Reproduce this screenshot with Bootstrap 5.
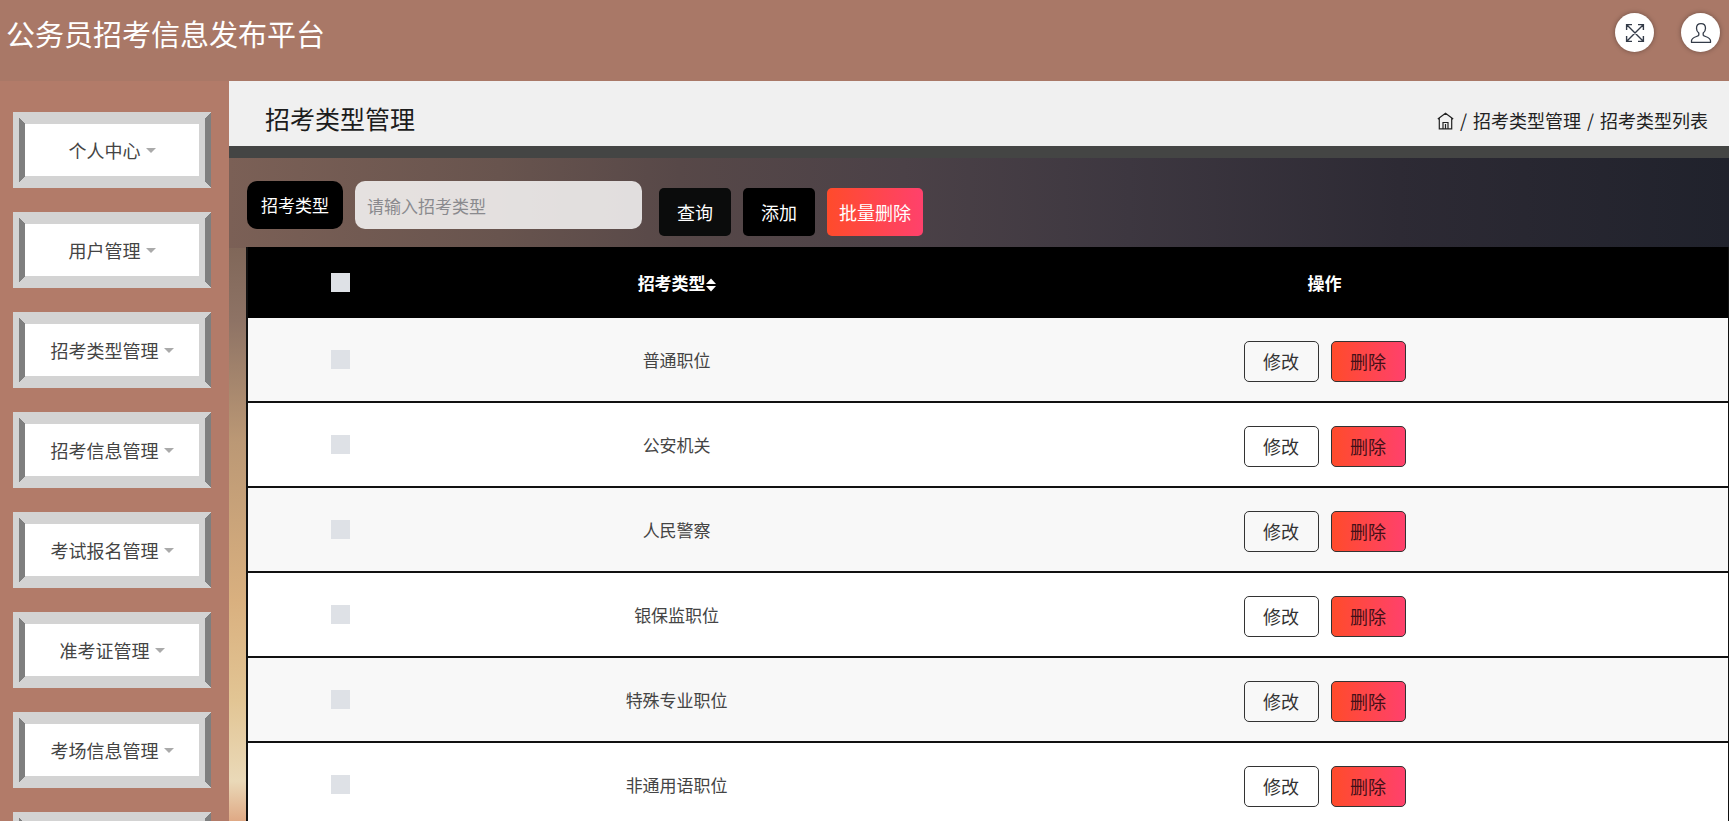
<!DOCTYPE html>
<html lang="zh-CN">
<head>
<meta charset="utf-8">
<meta name="viewport" content="width=device-width, initial-scale=1">
<title>公务员招考信息发布平台</title>
<link href="https://cdn.jsdelivr.net/npm/bootstrap@5.3.0/dist/css/bootstrap.min.css" rel="stylesheet">
<style>
  body { font-family: "Noto Sans CJK SC", sans-serif; font-size: 17px; line-height: 24px; padding-right: 2px; background: #fff; }
  .topbar { background: #a97867; height: 81px; padding: 0 9px 16px 6px; }
  .brand { color: #fff; font-size: 29px; line-height: 40px; }
  .round-btn { width: 39px; height: 39px; background: #fff; color: #333b48; box-shadow: 0 0 5px rgba(0,0,0,.35); }
  .tool-gap { gap: 27px; }
  .scroller { overflow-y: auto; scrollbar-width: none; }
  .scroller::-webkit-scrollbar { display: none; }
  .side { width: 229px; background: #b27b69; padding: 31px 18px 24px 13px; gap: 24px; }
  .side-link { height: 76px; gap: 5px; background: #fff; border: 12px solid lightgray; border-left-style: ridge; border-right-style: ridge; color: #444; font-size: 18px; border-radius: 0; padding: 0; }
  .caret { border: 5px solid transparent; border-top-color: #aaa; border-bottom: 0; }
  .content-area { min-width: 0;
    background: linear-gradient(90deg, #7b6056 0, #68544e 18%, #574848 30%, #4b4147 45%, #3d3740 60%, #2d2a34 78%, #20222c 100%) top / 100% 167px no-repeat,
      linear-gradient(#806759 167px, #8e7365 240px, #bb9875 360px, #d9b07f 520px, #e2c594 620px, #ead9b8 700px, #dfa985 740px); }
  .page-head { background: #f0f0f0; border-bottom: 12px solid #444544; height: 77px; padding: 0 21px 0 36px; }
  .page-title { font-size: 25px; line-height: 36px; color: #1c1c1c; }
  .breadcrumb { --bs-breadcrumb-item-padding-x: 6px; --bs-breadcrumb-divider-color: #222; font-size: 18px; color: #222; padding-top: 12px; }
  .breadcrumb svg { vertical-align: -2px; }
  .breadcrumb .active { color: #222; }
  .toolbar { padding: 23px 18px 11px; }
  .field-label { background: #000; color: #fff; border-radius: 10px; height: 48px; padding: 12px 14px; }
  .keyword { width: 287px; height: 48px; border: 0; border-radius: 10px; background: rgba(255,255,255,.82); font-size: 17px; padding: 0 12px; }
  .keyword::placeholder { color: #8a8a8e; }
  .tool-group { gap: 12px; padding: 7px 0 0 1px; }
  .tool-btn { height: 48px; font-size: 18px; border: 0; border-radius: 5px; color: #fff; padding: 0 18px; }
  .tool-wide { padding: 0 12px; }
  .bg-ink { background: #0b0c0c; }
  .hot { background: linear-gradient(90deg, #ff4b2b, #ff416c); }
  .table-frame { margin-left: 17px; }
  .type-table { table-layout: fixed; border: 1px solid #111; border-left-width: 2px; border-top: 0; font-size: 17px; color: #444; text-align: center; }
  .type-table > thead th { background: #000; color: #fff; height: 71px; border: 0; padding: 0; vertical-align: middle; }
  .type-table > tbody td { background: #fff; border-bottom: 2px solid #111; height: 85px; padding: 0; box-shadow: none; }
  .type-table > tbody tr:first-child td { height: 84px; }
  .type-table > tbody tr:nth-child(odd) td { background: #f8f8f8; }
  .col-check { width: 12.5%; }
  .col-type { width: 33%; }
  .tick { appearance: none; width: 19px; height: 19px; background: #dee1e6; display: block; margin: 0 auto; }
  .tick:checked { background: #6c757d; }
  .row-btn { width: 75px; height: 41px; border: 1px solid #333; border-radius: 5px; font-size: 18px; color: #333; padding: 0; }
  .row-btn.hot { color: #441018; }
  .row-tools { gap: 12px; padding-top: 4px; }
</style>
</head>
<body>
<div class="d-flex flex-column vh-100">
  <header class="topbar d-flex align-items-center justify-content-between flex-shrink-0">
    <h1 class="brand fw-normal mb-0">公务员招考信息发布平台</h1>
    <div class="d-flex tool-gap">
      <button type="button" class="btn round-btn rounded-circle p-0 d-flex align-items-center justify-content-center" aria-label="全屏">
        <svg width="20" height="20" viewBox="0 0 20 20" fill="none" stroke="currentColor" stroke-width="1.4"><path d="M2 2l16 16M18 2L2 18M1.600 7V1.600H7M13 1.600h5.400V7M18.400 13v5.400H13M7 18.400H1.600V13"/></svg>
      </button>
      <button type="button" class="btn round-btn rounded-circle p-0 d-flex align-items-center justify-content-center" aria-label="用户">
        <svg width="22" height="22" viewBox="0 0 22 22" fill="none" stroke="currentColor" stroke-width="1.3" stroke-linejoin="round"><path d="M11 1.600C8.200 1.600 6.500 3.500 6.500 6.200C6.500 8.200 7.400 10 8.800 11.100V13.200C8.600 14.600 1.500 14.800 1.500 18.800V20.400H20.500V18.800C20.500 14.800 13.400 14.600 13.200 13.200V11.100C14.600 10 15.500 8.200 15.500 6.200C15.500 3.500 13.800 1.600 11 1.600Z"/></svg>
      </button>
    </div>
  </header>
  <div class="d-flex flex-grow-1 overflow-hidden">
    <nav class="side scroller d-flex flex-column flex-shrink-0" aria-label="主菜单">
      <button type="button" class="btn side-link d-flex align-items-center justify-content-center flex-shrink-0">个人中心<span class="caret"></span></button>
      <button type="button" class="btn side-link d-flex align-items-center justify-content-center flex-shrink-0">用户管理<span class="caret"></span></button>
      <button type="button" class="btn side-link d-flex align-items-center justify-content-center flex-shrink-0">招考类型管理<span class="caret"></span></button>
      <button type="button" class="btn side-link d-flex align-items-center justify-content-center flex-shrink-0">招考信息管理<span class="caret"></span></button>
      <button type="button" class="btn side-link d-flex align-items-center justify-content-center flex-shrink-0">考试报名管理<span class="caret"></span></button>
      <button type="button" class="btn side-link d-flex align-items-center justify-content-center flex-shrink-0">准考证管理<span class="caret"></span></button>
      <button type="button" class="btn side-link d-flex align-items-center justify-content-center flex-shrink-0">考场信息管理<span class="caret"></span></button>
      <button type="button" class="btn side-link d-flex align-items-center justify-content-center flex-shrink-0" aria-label="更多"></button>
    </nav>
    <main class="content-area scroller flex-grow-1">
      <div class="page-head d-flex align-items-center justify-content-between">
        <h2 class="page-title fw-normal mb-0 pt-2">招考类型管理</h2>
        <nav aria-label="当前位置">
          <ol class="breadcrumb mb-0">
            <li class="breadcrumb-item"><a href="#" class="text-reset" aria-label="首页"><svg width="17" height="18" viewBox="0 0 17 18" fill="none" stroke="currentColor" stroke-width="1.2"><path d="M.8 7L8.500 1.200L16.200 7M2.300 6V16.800H14.700V6M6 16.500V10.500H11V16.500M8.500 12v4.500"/></svg></a></li>
            <li class="breadcrumb-item"><a href="#" class="text-reset text-decoration-none">招考类型管理</a></li>
            <li class="breadcrumb-item active" aria-current="page">招考类型列表</li>
          </ol>
        </nav>
      </div>
      <form class="toolbar d-flex align-items-start">
        <label class="field-label me-2" for="keyword">招考类型</label>
        <input id="keyword" type="text" class="form-control keyword ms-1 me-3" placeholder="请输入招考类型">
        <div class="tool-group d-flex">
          <button type="button" class="btn tool-btn bg-ink">查询</button>
          <button type="button" class="btn tool-btn bg-black">添加</button>
          <button type="button" class="btn tool-btn tool-wide hot">批量删除</button>
        </div>
      </form>
      <div class="table-frame">
        <table class="table type-table align-middle mb-0">
          <thead>
            <tr>
              <th class="col-check"><input type="checkbox" class="tick" aria-label="全选"></th>
              <th class="col-type">招考类型<svg width="10" height="14" viewBox="0 0 10 14" fill="currentColor"><path d="M0 6L5 .5L10 6ZM0 8H10L5 13.500Z"/></svg></th>
              <th>操作</th>
            </tr>
          </thead>
          <tbody>
            <tr><td><input type="checkbox" class="tick" aria-label="选择普通职位"></td><td>普通职位</td><td><div class="row-tools d-flex justify-content-center"><button type="button" class="btn row-btn">修改</button><button type="button" class="btn row-btn hot">删除</button></div></td></tr>
            <tr><td><input type="checkbox" class="tick" aria-label="选择公安机关"></td><td>公安机关</td><td><div class="row-tools d-flex justify-content-center"><button type="button" class="btn row-btn">修改</button><button type="button" class="btn row-btn hot">删除</button></div></td></tr>
            <tr><td><input type="checkbox" class="tick" aria-label="选择人民警察"></td><td>人民警察</td><td><div class="row-tools d-flex justify-content-center"><button type="button" class="btn row-btn">修改</button><button type="button" class="btn row-btn hot">删除</button></div></td></tr>
            <tr><td><input type="checkbox" class="tick" aria-label="选择银保监职位"></td><td>银保监职位</td><td><div class="row-tools d-flex justify-content-center"><button type="button" class="btn row-btn">修改</button><button type="button" class="btn row-btn hot">删除</button></div></td></tr>
            <tr><td><input type="checkbox" class="tick" aria-label="选择特殊专业职位"></td><td>特殊专业职位</td><td><div class="row-tools d-flex justify-content-center"><button type="button" class="btn row-btn">修改</button><button type="button" class="btn row-btn hot">删除</button></div></td></tr>
            <tr><td><input type="checkbox" class="tick" aria-label="选择非通用语职位"></td><td>非通用语职位</td><td><div class="row-tools d-flex justify-content-center"><button type="button" class="btn row-btn">修改</button><button type="button" class="btn row-btn hot">删除</button></div></td></tr>
          </tbody>
        </table>
      </div>
    </main>
  </div>
</div>
<script src="https://cdn.jsdelivr.net/npm/bootstrap@5.3.0/dist/js/bootstrap.bundle.min.js"></script>
</body>
</html>
